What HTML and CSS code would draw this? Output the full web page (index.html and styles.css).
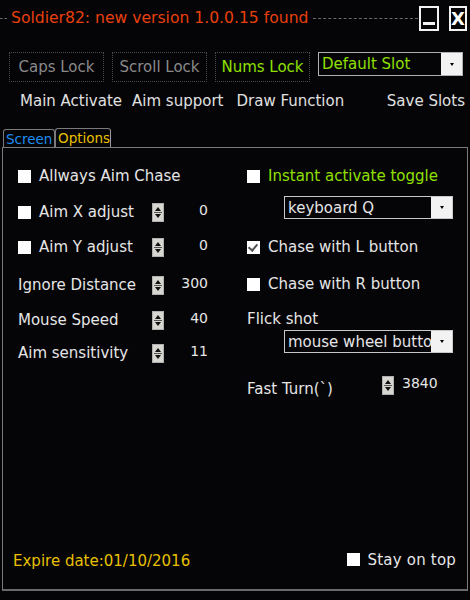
FILE: index.html
```html
<!DOCTYPE html>
<html lang="en">
<head>
	<meta charset="UTF-8">
	<title>Soldier82</title>
	<link rel="stylesheet" href="styles.css">
</head>
<body>
	<div class="titlebar">
		<span class="dash short"></span>
		<span class="title">Soldier82: new version 1.0.0.15 found</span>
		<span class="dash long"></span>
		<span class="winbtn min"><span class="bar"></span></span>
		<span class="winbtn close">X</span>
	</div>

	<div class="toolbar">
		<div class="lockbtn">Caps Lock</div>
		<div class="lockbtn">Scroll Lock</div>
		<div class="lockbtn on">Nums Lock</div>
		<div class="combo slot"><span class="val">Default Slot</span><span class="drop"><span class="arrow"></span></span></div>
	</div>

	<div class="captions">
		<span class="cap c1">Main Activate</span>
		<span class="cap c2">Aim support</span>
		<span class="cap c3">Draw Function</span>
		<span class="cap c4">Save Slots</span>
	</div>

	<div class="tabs">
		<div class="tab screen">Screen</div>
		<div class="tab options">Options</div>
	</div>

	<div class="panel">
		<div class="cols">
			<div class="col left">
				<div class="row r1"><span class="chk"></span>Allways Aim Chase</div>
				<div class="row r2"><span class="chk"></span><span class="lbl">Aim X adjust</span><span class="spin"></span><span class="num">0</span></div>
				<div class="row r3"><span class="chk"></span><span class="lbl">Aim Y adjust</span><span class="spin"></span><span class="num">0</span></div>
				<div class="row r4"><span class="lbl">Ignore Distance</span><span class="spin"></span><span class="num">300</span></div>
				<div class="row r5"><span class="lbl">Mouse Speed</span><span class="spin"></span><span class="num">40</span></div>
				<div class="row r6"><span class="lbl">Aim sensitivity</span><span class="spin"></span><span class="num">11</span></div>
			</div>
			<div class="col right">
				<div class="row r1 green"><span class="chk"></span>Instant activate toggle</div>
				<div class="combo key"><span class="val">keyboard Q</span><span class="drop"><span class="arrow"></span></span></div>
				<div class="row r3b"><span class="chk checked"></span>Chase with L button</div>
				<div class="row r4b"><span class="chk"></span>Chase with R button</div>
				<div class="row r5b">Flick shot</div>
				<div class="combo flick"><span class="val">mouse wheel butto</span><span class="drop"><span class="arrow"></span></span></div>
				<div class="row r7b"><span class="lbl">Fast Turn(`)</span><span class="spin"></span><span class="num left">3840</span></div>
			</div>
		</div>
		<div class="footer">
			<span class="expire">Expire date:01/10/2016</span>
			<span class="stay"><span class="chk"></span>Stay on top</span>
		</div>
	</div>
</body>
</html>
```

FILE: styles.css
```css
body {
	margin: 0;
	background-color: #050407;
	color: #e6e6e6;
	font-family: 'DejaVu Sans', sans-serif;
	font-size: 14px;
	width: 470px;
	height: 600px;
	overflow: hidden;
}
.titlebar {
	display: flex;
	align-items: center;
	height: 36px;
}
.dash {
	border-top: 1px dashed #6a6a6a;
	height: 0;
	margin-top: 1px;
}
.dash.short {
	width: 7px;
}
.dash.long {
	flex: 1;
	margin-left: 5px;
	margin-right: 1px;
}
.title {
	color: #e8400c;
	font-size: 15.6px;
	margin-left: 4px;
	white-space: nowrap;
}
.winbtn {
	border: 2px solid #f2f2f2;
	height: 21px;
	box-sizing: content-box;
	display: flex;
	align-items: center;
	justify-content: center;
}
.winbtn.min {
	width: 16px;
	align-items: flex-end;
}
.winbtn.min .bar {
	width: 12px;
	height: 3px;
	background: #f2f2f2;
	margin-bottom: 4px;
}
.winbtn.close {
	width: 14px;
	margin-left: 10px;
	margin-right: 3px;
	color: #fff;
	font-weight: bold;
	font-size: 18px;
}
.toolbar {
	display: flex;
	align-items: flex-start;
	margin-top: 16px;
	padding-left: 9px;
	gap: 8px;
}
.lockbtn {
	width: 95px;
	height: 30px;
	border: 1px dotted #4a4a4a;
	box-sizing: border-box;
	display: flex;
	align-items: center;
	justify-content: center;
	color: #8a8a8a;
	font-size: 15px;
}
.lockbtn.on {
	color: #8fe000;
}
.combo {
	display: flex;
	border: 1px solid #b0b0b0;
	background: #050407;
	box-sizing: border-box;
	height: 24px;
}
.combo .val {
	flex: 1;
	padding-left: 3px;
	display: flex;
	align-items: center;
	font-size: 15px;
	white-space: nowrap;
	overflow: hidden;
}
.combo .drop {
	width: 21px;
	background: #f2f2f2;
	display: flex;
	align-items: center;
	justify-content: center;
}
.arrow {
	width: 0;
	height: 0;
	border-left: 2px solid transparent;
	border-right: 2px solid transparent;
	border-top: 3px solid #000;
}
.combo.slot {
	width: 145px;
	color: #8fe000;
}
.captions {
	display: flex;
	height: 24px;
	margin-top: 10px;
	font-size: 15px;
	color: #e0e0e0;
}
.cap.c1 {
	margin-left: 20px;
}
.cap.c2 {
	margin-left: 10px;
}
.cap.c3 {
	margin-left: 13px;
}
.cap.c4 {
	margin-left: auto;
	margin-right: 5px;
}
.tabs {
	display: flex;
	margin-top: 12px;
	padding-left: 3px;
	height: 19px;
}
.tab {
	border: 1px solid #7a7a7a;
	border-bottom: none;
	border-radius: 3px 3px 0 0;
	padding: 0 2px;
	font-size: 13.5px;
	line-height: 18px;
	box-sizing: border-box;
}
.tab.screen {
	color: #1e8cf0;
	width: 52px;
	margin-top: 1px;
	height: 18px;
}
.tab.options {
	color: #e8c000;
	width: 56px;
	border-right-color: #9a9a9a;
}
.panel {
	margin-left: 2px;
	width: 466px;
	height: 444px;
	border: 1px solid #7a7a7a;
	border-bottom: 2px solid #6a6a6a;
	box-sizing: border-box;
	display: flex;
	flex-direction: column;
}
.cols {
	display: flex;
	padding-top: 18px;
}
.col.left {
	width: 214px;
	padding-left: 15px;
}
.col.right {
	flex: 1;
	padding-left: 15px;
}
.row {
	display: flex;
	align-items: center;
	height: 20px;
	font-size: 15px;
	white-space: nowrap;
}
.chk {
	width: 13px;
	height: 13px;
	background: #fff;
	margin-right: 8px;
	flex-shrink: 0;
	position: relative;
}
.chk.checked::after {
	content: '';
	position: absolute;
	left: 3px;
	top: 1px;
	width: 4px;
	height: 7px;
	border-right: 2px solid #555;
	border-bottom: 2px solid #555;
	transform: rotate(40deg);
}
.left .row .lbl {
	width: 134px;
}
.left .row .chk + .lbl {
	width: 113px;
}
.spin {
	width: 12px;
	height: 19px;
	flex-shrink: 0;
	background:
		linear-gradient(#555, #555) center 50% / 8px 1px no-repeat,
		#d8d6d0;
	position: relative;
	border: 1px solid #b0b0b0;
	box-sizing: border-box;
}
.spin::before, .spin::after {
	content: '';
	position: absolute;
	left: 2px;
	border-left: 3px solid transparent;
	border-right: 3px solid transparent;
}
.spin::before {
	top: 3px;
	border-bottom: 4px solid #111;
}
.spin::after {
	bottom: 3px;
	border-top: 4px solid #111;
}
.num {
	width: 44px;
	text-align: right;
	font-size: 14px;
	margin-top: -5px;
}
.left .r2 { margin-top: 16px; }
.left .r3 { margin-top: 15px; }
.left .r4 { margin-top: 18px; }
.left .r5 { margin-top: 15px; }
.left .r6 { margin-top: 13px; }
.green {
	color: #8fe000;
}
.combo.key {
	width: 169px;
	height: 23px;
	margin-top: 10px;
	margin-left: 37px;
	border-color: #c8c8c8;
}
.right .r3b { margin-top: 18px; }
.right .r4b { margin-top: 17px; }
.right .r5b { margin-top: 15px; }
.combo.flick {
	width: 169px;
	height: 23px;
	margin-top: 1px;
	margin-left: 37px;
	border-color: #c8c8c8;
}
.right .r7b {
	margin-top: 26px;
}
.right .r7b .lbl {
	width: 135px;
}
.right .r7b .spin {
	margin-bottom: 8px;
}
.num.left {
	width: auto;
	text-align: left;
	margin-left: 8px;
	margin-top: 0;
	margin-bottom: 12px;
}
.footer {
	margin-top: auto;
	margin-bottom: 19px;
	display: flex;
	align-items: center;
	padding-left: 10px;
	padding-right: 11px;
	font-size: 15px;
}
.expire {
	color: #e8c000;
	margin-top: 3px;
}
.stay {
	margin-left: auto;
	display: flex;
	align-items: center;
	letter-spacing: 0.2px;
}
```
